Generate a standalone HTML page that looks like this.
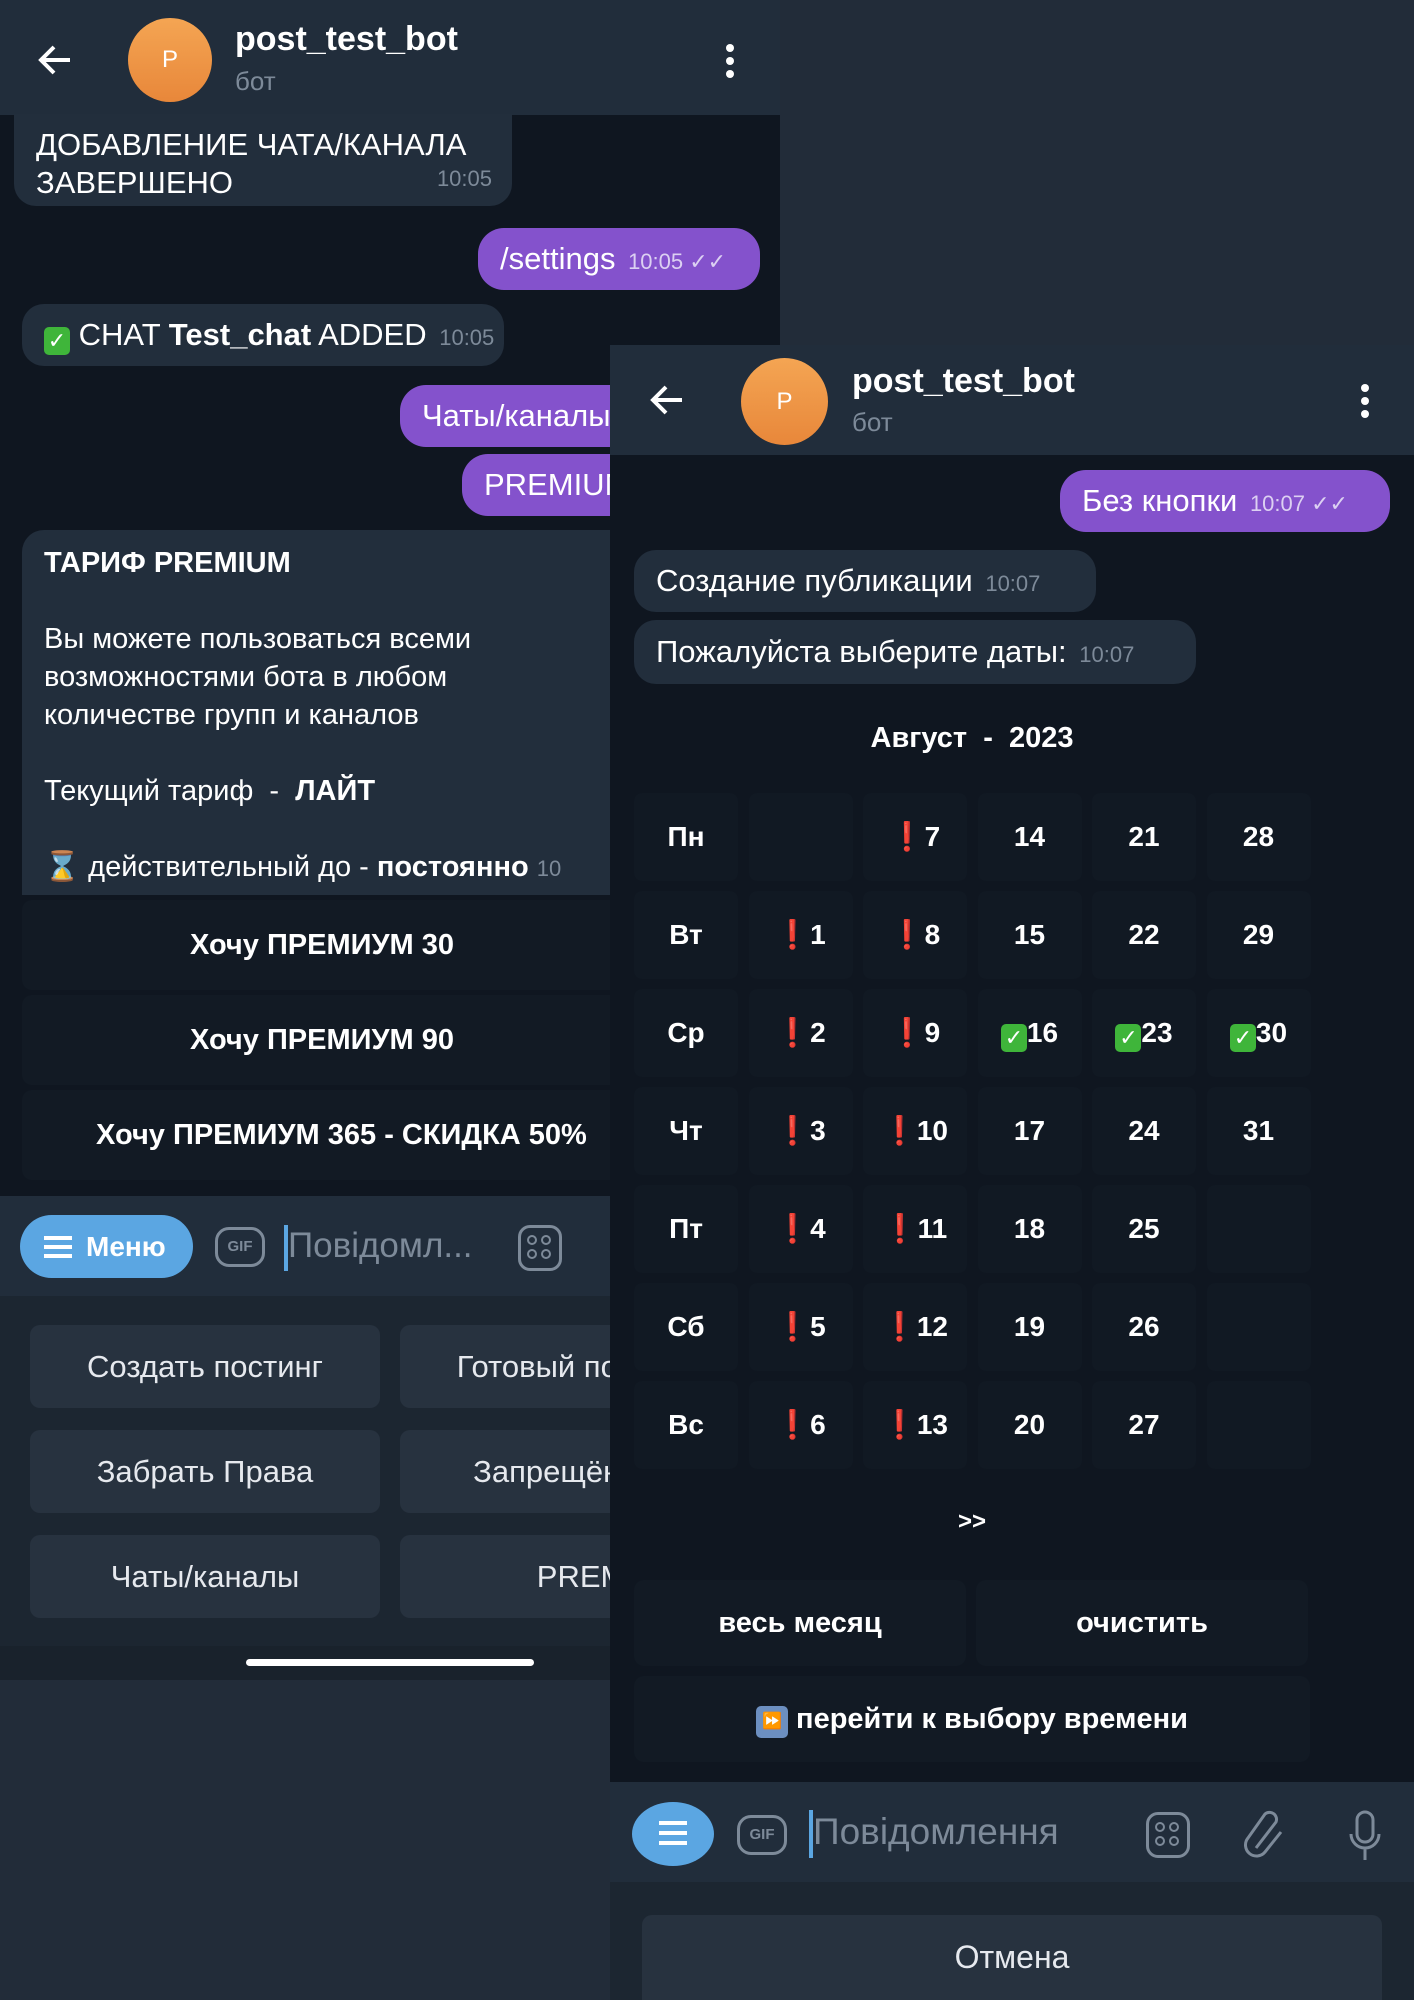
<!DOCTYPE html><html><head><meta charset="utf-8"><style>
*{margin:0;padding:0;box-sizing:border-box}
body{width:1414px;height:2000px;background:#222c39;position:relative;overflow:hidden;font-family:"Liberation Sans","DejaVu Sans",sans-serif;color:#fff}
.a{position:absolute}
.hdr{background:#212d3b}
.chat{background:#0f1620}
.bub{position:absolute;background:#222e3c;border-radius:22px;font-size:31px;line-height:38px;padding:8px 22px;white-space:nowrap}
.pur{position:absolute;background:#8452cc;border-radius:26px;font-size:31px;line-height:38px;padding:12px 22px;white-space:nowrap}
.t{font-size:22px;color:#7d8a99}
.tp{font-size:22px;color:#dcd0f2}
.kb{position:absolute;background:#121a24;border-radius:10px;font-weight:bold;font-size:29px;text-align:center;white-space:nowrap}
.cell{position:absolute;width:104px;height:88px;background:#111923;border-radius:8px;font-weight:bold;font-size:28px;text-align:center;line-height:88px}
.ex{color:#e0202a}
.ck{display:inline-block;width:26px;height:28px;background:#3fb53a;border-radius:5px;color:#fff;font-size:22px;line-height:28px;vertical-align:-3px;text-align:center}
.rb{position:absolute;background:#27323f;border-radius:10px;font-size:31px;text-align:center;line-height:83px;color:#e6e9ee;overflow:hidden;white-space:nowrap}
.av{position:absolute;border-radius:50%;background:linear-gradient(#f4a553,#e8873a);color:#fff;font-size:24px;text-align:center}
.gr{position:absolute;width:44px;height:46px;border:3px solid #7d8a99;border-radius:12px}
.gr i{position:absolute;width:10px;height:10px;border:2.5px solid #7d8a99;border-radius:50%}
</style></head><body>
<!-- LEFT PANEL -->
<div class="a chat" style="left:0;top:0;width:780px;height:1680px"></div>
<div class="a hdr" style="left:0;top:0;width:780px;height:115px"></div>
<svg class="a" style="left:36px;top:42px" width="40" height="36" viewBox="0 0 40 36"><path d="M34 18H6M18 5L5 18l13 13" stroke="#fff" stroke-width="4" fill="none"/></svg>
<div class="av" style="left:128px;top:18px;width:84px;height:84px;line-height:84px">P</div>
<div class="a" style="left:235px;top:20px;font-size:34px;font-weight:bold">post_test_bot</div>
<div class="a" style="left:235px;top:66px;font-size:26px;color:#7d8a99">бот</div>
<div class="a" style="left:726px;top:44px;width:8px"><div style="width:8px;height:8px;background:#fff;border-radius:50%;margin-bottom:5px"></div><div style="width:8px;height:8px;background:#fff;border-radius:50%;margin-bottom:5px"></div><div style="width:8px;height:8px;background:#fff;border-radius:50%"></div></div>
<div class="bub" style="left:14px;top:114px;width:498px;height:92px;padding-top:12px;border-radius:0 0 22px 22px">ДОБАВЛЕНИЕ ЧАТА/КАНАЛА<br>ЗАВЕРШЕНО <span class="t a" style="right:20px;bottom:8px">10:05</span></div>
<div class="pur" style="left:478px;top:228px;width:282px;height:62px">/settings <span class="tp" style="margin-left:4px">10:05 ✓✓</span></div>
<div class="bub" style="left:22px;top:304px;width:482px;height:62px;padding-top:12px"><span class="ck">✓</span> CHAT <b>Test_chat</b> ADDED <span class="t" style="margin-left:4px">10:05</span></div>
<div class="pur" style="left:400px;top:385px;width:240px;height:62px">Чаты/каналы</div>
<div class="pur" style="left:462px;top:454px;width:180px;height:62px">PREMIUM</div>
<div class="bub" style="left:22px;top:530px;width:600px;height:365px;border-radius:22px 0 0 0;padding-top:14px;line-height:38px;font-size:29px">
<b>ТАРИФ PREMIUM</b><br><br>Вы можете пользоваться всеми<br>возможностями бота в любом<br>количестве групп и каналов<br><br>Текущий тариф &nbsp;- &nbsp;<b>ЛАЙТ</b><br><br>⌛ действительный до - <b>постоянно</b> <span class="t">10</span></div>
<div class="kb" style="left:22px;top:900px;width:600px;height:90px;line-height:90px">Хочу ПРЕМИУМ 30</div>
<div class="kb" style="left:22px;top:995px;width:600px;height:90px;line-height:90px">Хочу ПРЕМИУМ 90</div>
<div class="kb" style="left:22px;top:1090px;width:600px;height:90px;line-height:90px;padding-left:74px;text-align:left">Хочу ПРЕМИУМ 365 - СКИДКА 50%</div>
<div class="a hdr" style="left:0;top:1196px;width:780px;height:100px"></div>
<div class="a" style="left:20px;top:1215px;width:173px;height:63px;border-radius:32px;background:#5ba6e2;font-size:28px;font-weight:bold;line-height:63px;padding-left:66px">Меню</div>
<div class="a" style="left:44px;top:1236px;width:28px"><div style="height:4px;background:#fff;margin-bottom:5px"></div><div style="height:4px;background:#fff;margin-bottom:5px"></div><div style="height:4px;background:#fff"></div></div>
<div class="a" style="left:215px;top:1227px;width:50px;height:40px;border:3px solid #7d8a99;border-radius:14px;font-size:15px;font-weight:bold;color:#7d8a99;text-align:center;line-height:34px">GIF</div>
<div class="a" style="left:284px;top:1225px;width:4px;height:46px;background:#5ba6e2"></div>
<div class="a" style="left:288px;top:1226px;font-size:35px;color:#7d8a99">Повідомл...</div>
<div class="gr" style="left:518px;top:1225px"><i style="left:6px;top:7px"></i><i style="left:20px;top:7px"></i><i style="left:6px;top:21px"></i><i style="left:20px;top:21px"></i></div>
<div class="a" style="left:0;top:1296px;width:780px;height:350px;background:#1c2631"></div>
<div class="rb" style="left:30px;top:1325px;width:350px;height:83px">Создать постинг</div>
<div class="rb" style="left:400px;top:1325px;width:350px;height:83px">Готовый постинг</div>
<div class="rb" style="left:30px;top:1430px;width:350px;height:83px">Забрать Права</div>
<div class="rb" style="left:400px;top:1430px;width:350px;height:83px">Запрещённые</div>
<div class="rb" style="left:30px;top:1535px;width:350px;height:83px">Чаты/каналы</div>
<div class="rb" style="left:400px;top:1535px;width:350px;height:83px;padding-left:70px">PREMIUM</div>
<div class="a" style="left:0;top:1646px;width:780px;height:34px;background:#19222c"></div>
<div class="a" style="left:246px;top:1659px;width:288px;height:7px;border-radius:4px;background:#fff"></div>

<!-- RIGHT PANEL -->
<div class="a chat" style="left:610px;top:345px;width:804px;height:1655px"></div>
<div class="a hdr" style="left:610px;top:345px;width:804px;height:110px"></div>
<svg class="a" style="left:648px;top:382px" width="40" height="36" viewBox="0 0 40 36"><path d="M34 18H6M18 5L5 18l13 13" stroke="#fff" stroke-width="4" fill="none"/></svg>
<div class="av" style="left:741px;top:358px;width:87px;height:87px;line-height:87px">P</div>
<div class="a" style="left:852px;top:362px;font-size:34px;font-weight:bold">post_test_bot</div>
<div class="a" style="left:852px;top:407px;font-size:26px;color:#7d8a99">бот</div>
<div class="a" style="left:1361px;top:384px;width:8px"><div style="width:8px;height:8px;background:#fff;border-radius:50%;margin-bottom:5px"></div><div style="width:8px;height:8px;background:#fff;border-radius:50%;margin-bottom:5px"></div><div style="width:8px;height:8px;background:#fff;border-radius:50%"></div></div>
<div class="pur" style="left:1060px;top:470px;width:330px;height:62px">Без кнопки <span class="tp" style="margin-left:4px">10:07 ✓✓</span></div>
<div class="bub" style="left:634px;top:550px;width:462px;height:62px;padding-top:12px">Создание публикации <span class="t" style="margin-left:4px">10:07</span></div>
<div class="bub" style="left:634px;top:620px;width:562px;height:64px;padding-top:13px">Пожалуйста выберите даты: <span class="t" style="margin-left:4px">10:07</span></div>
<div class="a" style="left:634px;top:722px;width:676px;text-align:center;font-size:29px;font-weight:bold">Август &nbsp;- &nbsp;2023</div>
<div id="cal"></div>
<div class="a" style="left:634px;top:1508px;width:676px;text-align:center;font-size:24px;font-weight:bold">&gt;&gt;</div>
<div class="kb" style="left:634px;top:1580px;width:332px;height:86px;line-height:86px">весь месяц</div>
<div class="kb" style="left:976px;top:1580px;width:332px;height:86px;line-height:86px">очистить</div>
<div class="kb" style="left:634px;top:1676px;width:676px;height:86px;line-height:86px"><span style="display:inline-block;width:32px;height:32px;background:#6c8fc0;border-radius:5px;font-size:16px;line-height:32px;vertical-align:2px">⏩</span> перейти к выбору времени</div>
<div class="a hdr" style="left:610px;top:1782px;width:804px;height:100px"></div>
<div class="a" style="left:632px;top:1802px;width:82px;height:64px;border-radius:50%;background:#5ba6e2"></div>
<div class="a" style="left:659px;top:1821px;width:28px"><div style="height:4px;background:#fff;margin-bottom:6px"></div><div style="height:4px;background:#fff;margin-bottom:6px"></div><div style="height:4px;background:#fff"></div></div>
<div class="a" style="left:737px;top:1815px;width:50px;height:40px;border:3px solid #7d8a99;border-radius:14px;font-size:15px;font-weight:bold;color:#7d8a99;text-align:center;line-height:34px">GIF</div>
<div class="a" style="left:809px;top:1810px;width:4px;height:48px;background:#5ba6e2"></div>
<div class="a" style="left:813px;top:1811px;font-size:37px;color:#7d8a99">Повідомлення</div>
<div class="gr" style="left:1146px;top:1812px"><i style="left:6px;top:7px"></i><i style="left:20px;top:7px"></i><i style="left:6px;top:21px"></i><i style="left:20px;top:21px"></i></div>
<svg class="a" style="left:1242px;top:1808px" width="46" height="54" viewBox="0 0 46 54"><path d="M14 40L34 14a7 7 0 0 0-11-8L6 30a11 11 0 0 0 17 14l16-20" stroke="#7d8a99" stroke-width="3" fill="none"/></svg>
<svg class="a" style="left:1348px;top:1810px" width="34" height="52" viewBox="0 0 34 52"><rect x="9" y="2" width="16" height="30" rx="8" stroke="#7d8a99" stroke-width="3" fill="none"/><path d="M3 24a14 14 0 0 0 28 0M17 38v12" stroke="#7d8a99" stroke-width="3" fill="none"/></svg>
<div class="a" style="left:610px;top:1882px;width:804px;height:118px;background:#1c2631"></div>
<div class="rb" style="left:642px;top:1915px;width:740px;height:85px;line-height:85px;font-size:32px;border-radius:10px 10px 0 0">Отмена</div>
<script>
var rows=[["Пн","","!7","14","21","28"],["Вт","!1","!8","15","22","29"],["Ср","!2","!9","v16","v23","v30"],["Чт","!3","!10","17","24","31"],["Пт","!4","!11","18","25",""],["Сб","!5","!12","19","26",""],["Вс","!6","!13","20","27",""]];
var h="";
rows.forEach(function(r,i){r.forEach(function(c,j){var x=634+j*114.5,y=793+i*98;var s=c;
if(c[0]=="!")s='<span class="ex">❗</span>'+c.slice(1);else if(c[0]=="v")s='<span class="ck">✓</span>'+c.slice(1);
h+='<div class="cell" style="left:'+x+'px;top:'+y+'px">'+s+'</div>';});});
document.getElementById("cal").innerHTML=h;
</script>
</body></html>
